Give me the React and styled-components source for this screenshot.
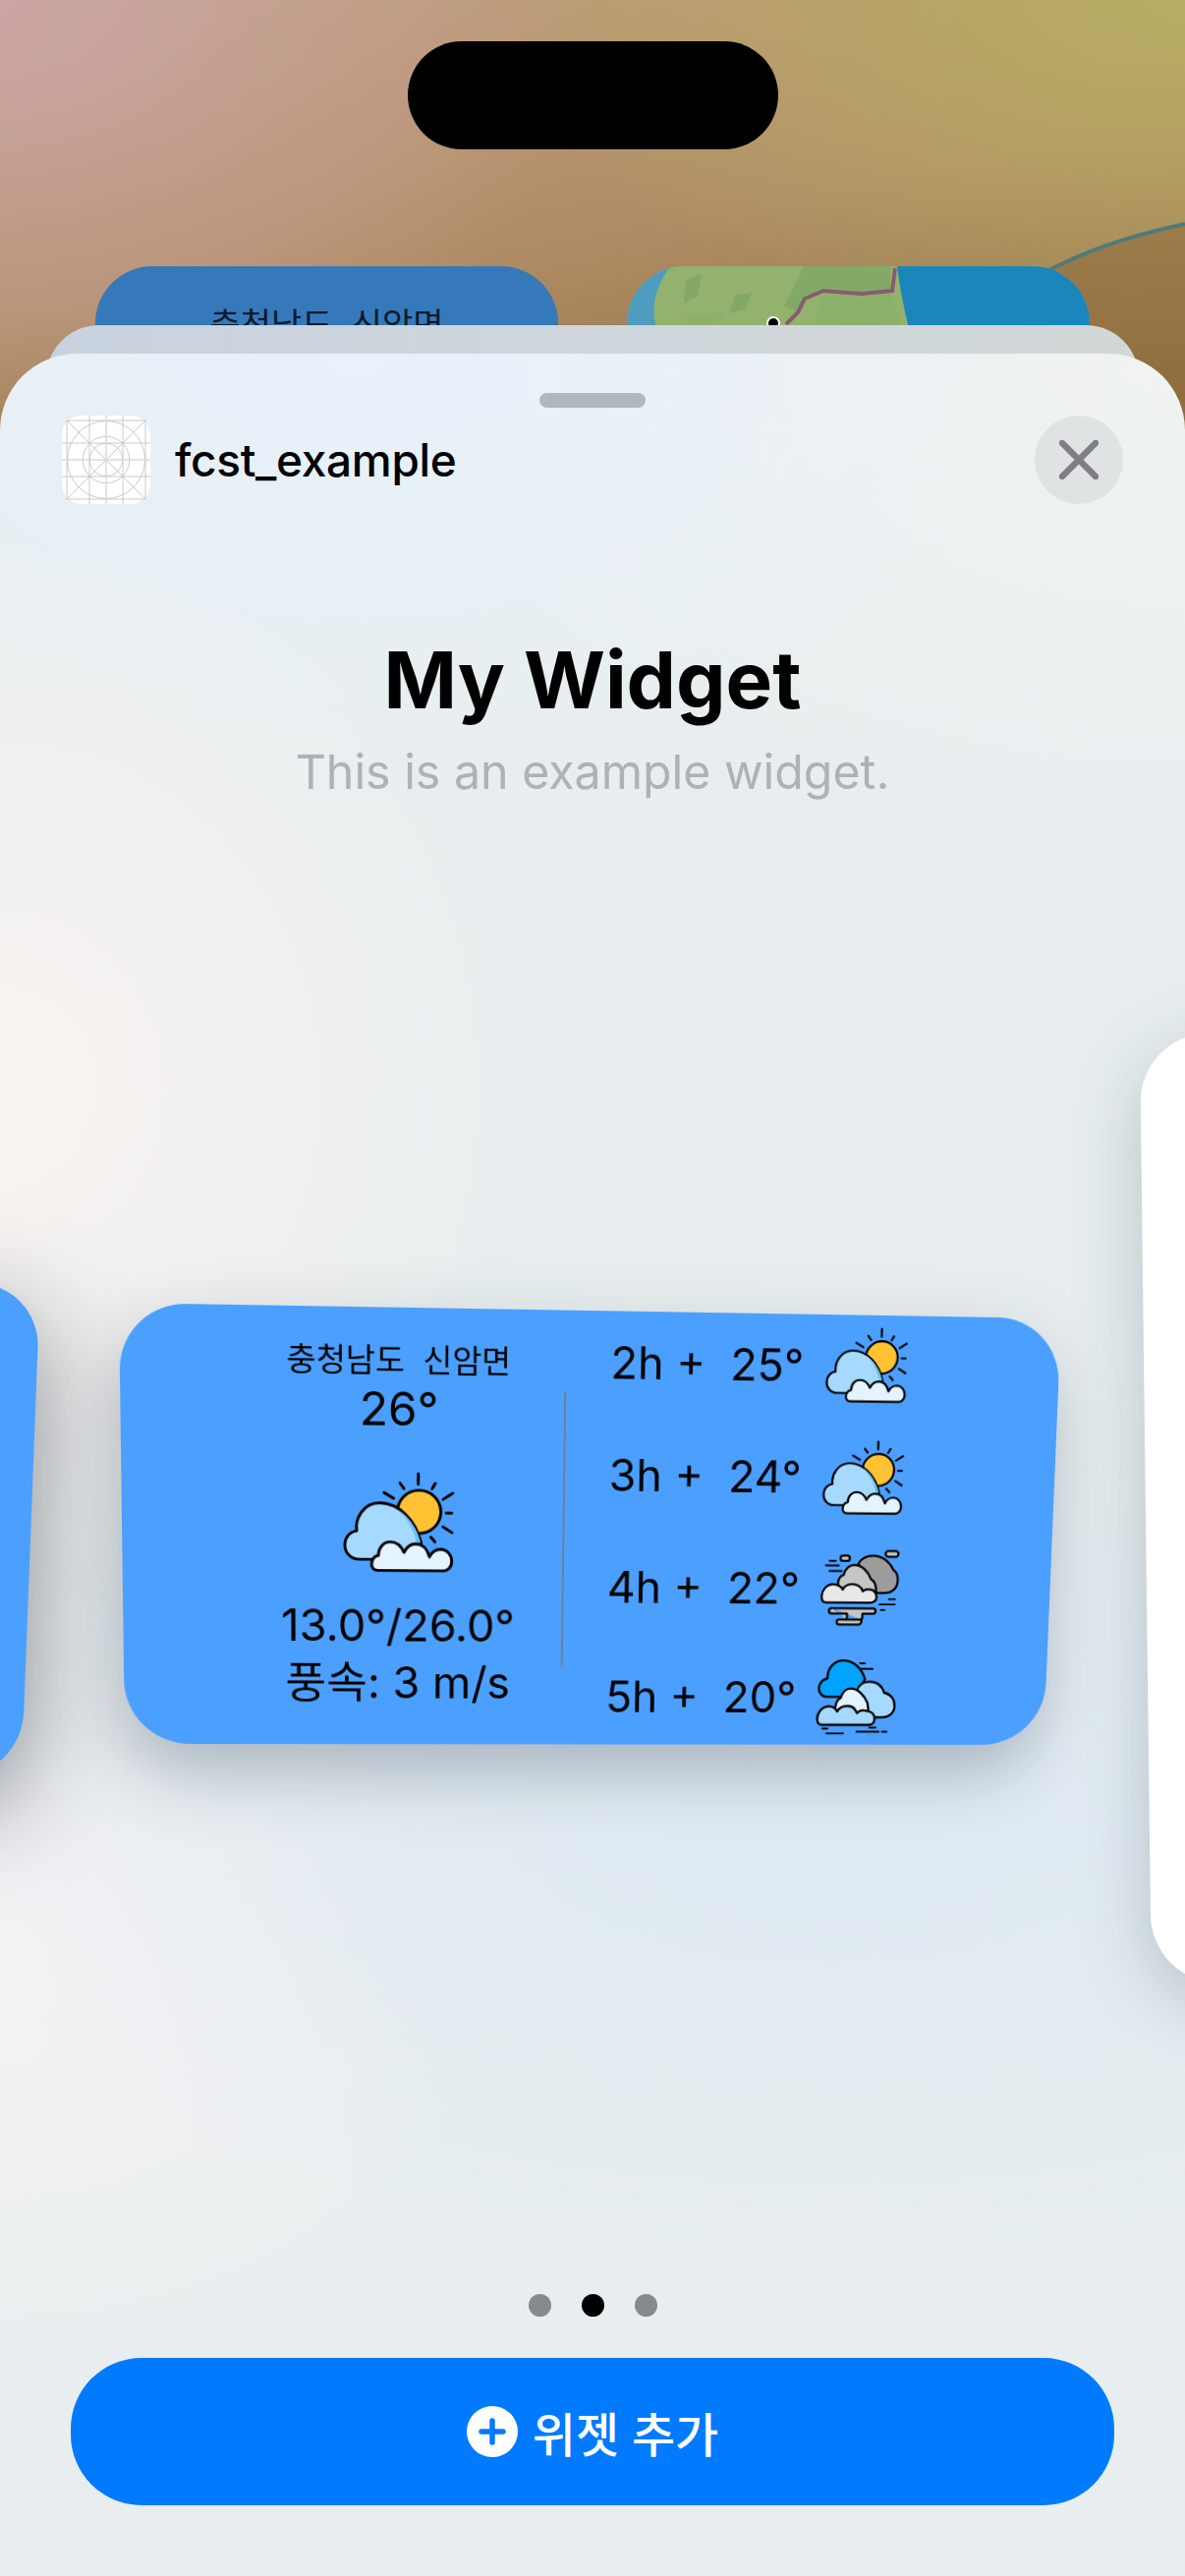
import React from "react";
import styled, { createGlobalStyle } from "styled-components";

const GlobalStyle = createGlobalStyle`
  html, body {
    margin: 0;
    padding: 0;
    background: #000;
  }
  body {
    font-family: Inter, "Noto Sans CJK KR", sans-serif;
  }
`;

const Screen = styled.div`
  position: relative;
  width: 1206px;
  height: 2622px;
  overflow: hidden;
  background:
    radial-gradient(760px 560px at 0% 0%, #cba4a4 0%, rgba(203, 164, 164, 0) 80%),
    radial-gradient(760px 420px at 100% 0%, #b8ae62 0%, rgba(184, 174, 98, 0) 90%),
    radial-gradient(720px 520px at 0% 55%, #b2837b 0%, rgba(178, 131, 123, 0) 85%),
    linear-gradient(170deg, #c0a07c 0%, #b08d66 12%, #916e40 22%);
`;

const Horizon = styled.svg`
  position: absolute;
  top: 0;
  left: 0;
`;

const Island = styled.div`
  position: relative;
  width: 377px;
  height: 110px;
  margin: 42px auto 0;
  border-radius: 55px;
  background: #000;
`;

const HomeRow = styled.div`
  position: relative;
  display: flex;
  gap: 70px;
  margin: 119px 0 0 97px;
`;

const HomeWidget = styled.div`
  position: relative;
  width: 471px;
  height: 120px;
  overflow: hidden;
  border-radius: 58px 58px 0 0;
  background: ${props => props.$bg};
  text-align: center;
  font-size: 34px;
  line-height: 46px;
  color: #0b1a2a;
  padding-top: 37px;
  box-sizing: border-box;
  white-space: pre;
`;

const MapDrawing = styled.svg`
  position: absolute;
  top: 0;
  left: 0;
`;

const BackSheet = styled.div`
  position: absolute;
  top: 331px;
  left: 47px;
  right: 47px;
  height: 200px;
  border-radius: 54px 54px 0 0;
  background: linear-gradient(90deg, #c8d2de 0%, #cfd6dc 50%, #d2d8d7 100%);
`;

const Sheet = styled.div`
  position: absolute;
  top: 360px;
  left: 0;
  right: 0;
  bottom: 0;
  display: flex;
  flex-direction: column;
  overflow: hidden;
  border-radius: 78px 78px 0 0;
  padding-top: 40px;
  box-sizing: border-box;
  background:
    radial-gradient(520px 560px at 0% 33%, #f9f3f0 0%, rgba(249, 243, 240, 0) 100%),
    radial-gradient(700px 420px at 30% 0%, #e8f1fc 0%, rgba(232, 241, 252, 0) 100%),
    radial-gradient(800px 480px at 100% 0%, #f0f3f2 0%, rgba(240, 243, 242, 0) 100%),
    radial-gradient(1000px 440px at 70% 66%, #dfeaf4 0%, rgba(223, 234, 244, 0) 100%),
    radial-gradient(520px 400px at 0% 72%, #f6f3f4 0%, rgba(246, 243, 244, 0) 100%),
    #e8eeef;
`;

const Grabber = styled.div`
  align-self: center;
  width: 108px;
  height: 15px;
  border-radius: 8px;
  background: #b1b7c1;
`;

const Header = styled.div`
  display: flex;
  align-items: center;
  justify-content: space-between;
  height: 90px;
  margin-top: 8px;
  padding: 0 63px;
`;

const AppInfo = styled.div`
  display: flex;
  align-items: center;
  gap: 25px;
`;

const AppIcon = styled.svg`
  display: block;
  width: 90px;
  height: 90px;
`;

const AppName = styled.div`
  font-size: 46px;
  font-weight: 500;
  color: #000;
  letter-spacing: -0.3px;
`;

const CloseButton = styled.div`
  display: flex;
  align-items: center;
  justify-content: center;
  width: 90px;
  height: 90px;
  border-radius: 50%;
  background: #dfe3e4;
`;

const Title = styled.div`
  margin-top: 129px;
  text-align: center;
  font-size: 80px;
  line-height: 100px;
  font-weight: 700;
  color: #000;
`;

const Subtitle = styled.div`
  margin-top: 14px;
  text-align: center;
  font-size: 48.3px;
  line-height: 60px;
  color: #aeb1b5;
`;

const Carousel = styled.div`
  display: flex;
  align-items: flex-start;
  height: 967px;
  margin-top: 236px;
  flex-shrink: 0;
`;

const SideWidget = styled.div`
  flex-shrink: 0;
  width: 950px;
  height: 503px;
  margin: 254px 0 0 -909px;
  border-radius: 66px;
  background: #4ba0ff;
  box-shadow: 0 30px 100px rgba(50, 55, 70, 0.55);
  transform: skewX(-2.2deg);
  transform-origin: top right;
`;

const Widget = styled.div`
  display: flex;
  flex-shrink: 0;
  box-sizing: border-box;
  width: 950px;
  height: 445px;
  margin: 274px 0 0 80px;
  border-radius: 66px;
  background: #4ba0ff;
  box-shadow: -6px 30px 70px rgba(60, 72, 92, 0.34);
  color: #000;
  /* tilted card, four corners measured from the screenshot */
  transform: matrix3d(1.04431, 0.01742, 0, 0.00003632, 0.01384, 1.03555, 0, 0.00005917, 0, 0, 1, 0, 0, 0, 0, 1);
  transform-origin: 0 0;
`;

const NextWidget = styled.div`
  flex-shrink: 0;
  width: 300px;
  height: 967px;
  margin-left: 89px;
  border-radius: 70px;
  background: #fff;
  box-shadow: 0 20px 70px rgba(60, 80, 90, 0.28);
  transform: skewX(0.7deg);
  transform-origin: top left;
`;

const TodayColumn = styled.div`
  display: flex;
  flex-direction: column;
  align-items: center;
  box-sizing: border-box;
  width: 442px;
  padding: 33px 0 0 110px;
`;

const Place = styled.div`
  font-size: 32px;
  line-height: 40px;
  white-space: pre;
`;

const BigLine = styled.div`
  font-size: ${props => props.$size || 45}px;
  line-height: 56px;
  margin-top: ${props => props.$top || 0}px;
  white-space: pre;
`;

const TodayIcon = styled.div`
  width: 112px;
  height: 105px;
  margin-top: 35px;
`;

const Divider = styled.div`
  flex-shrink: 0;
  align-self: center;
  width: 1.5px;
  height: 282px;
  background: #6f7f92;
`;

const HoursColumn = styled.div`
  display: flex;
  flex-direction: column;
  gap: 14.5px;
  padding: 1px 0 0 45px;
`;

const HourRow = styled.div`
  display: flex;
  align-items: center;
  height: 100px;
`;

const HourText = styled.div`
  width: 219px;
  font-size: 45px;
  white-space: pre;
`;

const HourIcon = styled.div`
  width: 84px;
  height: 80px;
`;

const IconSvg = styled.svg`
  display: block;
  width: 100%;
  height: 100%;
`;

const Dots = styled.div`
  display: flex;
  justify-content: center;
  gap: 31px;
  margin-top: 316px;
`;

const Dot = styled.div`
  width: 23px;
  height: 23px;
  border-radius: 50%;
  background: ${props => (props.$active ? "#000" : "#87898d")};
`;

const AddButton = styled.div`
  display: flex;
  align-items: center;
  justify-content: center;
  gap: 15px;
  height: 150px;
  margin: 42px 72px 0;
  border-radius: 72px;
  background: #007aff;
  color: #fff;
  font-size: 48px;
  font-weight: 500;
`;

const Stroke = { stroke: "#000", strokeWidth: 9, strokeLinecap: "round", strokeLinejoin: "round" };

const SunCloudIcon = () => (
  <IconSvg viewBox="-3 0 348 320">
    <g {...Stroke} fill="none">
      <path d="M232 5V38M175 35L187 52M285 35L275 52M340 65L310 85M320 128H337M310 172L338 190M272 205L285 220M125 65L155 83" />
    </g>
    <circle cx="235" cy="125" r="68" fill="#ffc233" {...Stroke} />
    <path d="M90 277H50C20 277 3 255 3 232C3 208 18 190 40 187C34 150 60 98 112 98C170 98 225 150 242 225L130 290Z" fill="#a5dafe" {...Stroke} />
    <path d="M165 117C200 135 228 175 240 222L228 224C215 175 195 140 165 117Z" fill="#6fbdf8" />
    <path d="M105 312C92 312 85 300 87 288C89 274 98 266 108 264C108 238 125 221 145 221C165 221 180 235 188 254C197 236 210 227 225 227C247 227 262 245 268 268C276 250 292 243 305 243C325 245 338 262 338 282C338 300 325 312 312 312Z" fill="#e4f4ff" {...Stroke} />
  </IconSvg>
);

const FogCloudIcon = () => (
  <IconSvg viewBox="-2 0 254 248">
    <g {...Stroke} strokeWidth="6" fill="none">
      <path d="M25 37H45M13 52H55M25 70H65M190 177H240M220 160H240M195 195H207" />
    </g>
    <g {...Stroke} strokeWidth="7">
      <rect x="205" y="4" width="42" height="19" rx="9.5" fill="#c6c6c6" />
      <rect x="60" y="20" width="30" height="17" rx="8.5" fill="#c6c6c6" />
      <path d="M118 45C130 25 150 20 165 20C195 20 220 40 232 65C245 72 248 90 247 105C245 125 230 140 205 140H170L150 100Z" fill="#9c9c9c" />
      <path d="M55 120C50 100 60 85 72 82C75 62 90 50 105 50C130 50 150 70 160 95C170 100 178 115 178 135H60Z" fill="#c6c6c6" />
      <path d="M18 172C5 172 2 160 2 152C2 135 15 115 35 113C50 112 65 120 70 130C75 118 88 112 100 112C115 112 130 120 135 135C145 125 155 128 165 130C175 135 180 145 180 155C180 165 170 172 160 172Z" fill="#e8e8e8" />
      <path d="M36 190H170C181 190 181 207 170 207H136V218C136 224 134 227 128 227H62C50 227 50 243 62 243H122C132 243 134 236 134 226" fill="#c6c6c6" />
      <path d="M36 190C24 190 24 207 36 207H86V226" fill="#c6c6c6" />
    </g>
  </IconSvg>
);

const RainCloudIcon = () => (
  <IconSvg viewBox="0 0 250 240">
    <g {...Stroke} strokeWidth="6" fill="none">
      <path d="M133 12H148M138 29H173M20 219H36M33 235H86M128 229H198M168 215H188M208 229H223" />
    </g>
    <g {...Stroke} strokeWidth="7">
      <path d="M30 118C12 118 5 100 6 90C6 75 18 62 32 60C30 30 50 3 80 3C115 3 140 30 150 62L120 118Z" fill="#00a3ff" />
      <path d="M125 100C130 80 145 70 165 70C190 70 205 85 212 105C232 108 246 125 246 147C246 168 230 183 208 183H150Z" fill="#a5dafe" />
      <path d="M60 170C55 145 65 125 75 122C80 105 90 92 105 92C130 92 150 115 160 137L165 170Z" fill="#e4f4ff" />
      <path d="M18 207C6 207 3 195 3 187C3 170 15 150 38 148C50 148 60 155 65 165C72 150 85 147 98 147C112 147 122 155 128 170C135 160 150 160 160 163C175 165 184 175 184 188C184 200 175 207 165 207Z" fill="#a5dafe" />
    </g>
  </IconSvg>
);

const hours = [
  { text: "2h +  25°", Icon: SunCloudIcon },
  { text: "3h +  24°", Icon: SunCloudIcon },
  { text: "4h +  22°", Icon: FogCloudIcon },
  { text: "5h +  20°", Icon: RainCloudIcon },
];

const App = () => (
  <Screen>
    <GlobalStyle />
    <Horizon width="1206" height="480" viewBox="0 0 1206 480">
      <path d="M1206 228C1150 240 1100 255 1040 290V480H1206Z" fill="#8f6c3c" opacity="0.6" />
      <path d="M1206 228C1150 240 1100 255 1040 290" fill="none" stroke="#4f7a7c" strokeWidth="4" />
    </Horizon>
    <Island />
    <HomeRow>
      <HomeWidget $bg="#3579bb">충청남도  신암면</HomeWidget>
      <HomeWidget $bg="#93b26d">
        <MapDrawing width="471" height="120" viewBox="0 0 471 120">
          <path d="M0 0H44C30 20 24 40 30 62L44 120H0Z" fill="#4e9dbe" />
          <path d="M275 0H471V120H304C290 80 280 40 275 0Z" fill="#1a86bb" />
          <path d="M60 14L76 8L72 30L58 38ZM180 0H268V24L238 28L200 24L182 30L172 46L160 40ZM110 30L128 26L120 44L104 48Z" fill="#82aa66" />
          <path d="M200 30L268 26L278 60H190ZM60 50L100 46L90 58L62 60Z" fill="#8bb06a" />
          <path d="M273 2L270 25L239 28L200 25L181 33L174 47L162 59" fill="none" stroke="#8a5a72" strokeWidth="4" />
          <circle cx="149" cy="58" r="6" fill="#000" stroke="#fff" strokeWidth="2" />
        </MapDrawing>
      </HomeWidget>
    </HomeRow>
    <BackSheet />
    <Sheet>
      <Grabber />
      <Header>
        <AppInfo>
          <AppIcon viewBox="0 0 90 90">
            <rect width="90" height="90" rx="20" fill="#fff" />
            <g fill="none" stroke="#bdbdbd" strokeWidth="0.8">
              <path d="M28 0V90M62 0V90M0 28H90M0 62H90M5 5H85V85H5ZM5 5L85 85M85 5L5 85" />
              <circle cx="45" cy="45" r="39.5" />
              <circle cx="45" cy="45" r="23.7" />
              <circle cx="45" cy="45" r="16.7" />
            </g>
            <path d="M45 0V90M0 45H90" stroke="#dcdcdc" strokeWidth="1.6" />
          </AppIcon>
          <AppName>fcst_example</AppName>
        </AppInfo>
        <CloseButton>
          <svg width="40" height="40" viewBox="0 0 40 40">
            <path d="M3 3L37 37M37 3L3 37" stroke="#7d7f82" strokeWidth="6.5" strokeLinecap="round" />
          </svg>
        </CloseButton>
      </Header>
      <Title>My Widget</Title>
      <Subtitle>This is an example widget.</Subtitle>
      <Carousel>
        <SideWidget />
        <Widget>
          <TodayColumn>
            <Place>충청남도  신암면</Place>
            <BigLine $size={47}>26°</BigLine>
            <TodayIcon>
              <SunCloudIcon />
            </TodayIcon>
            <BigLine $top={25}>13.0°/26.0°</BigLine>
            <BigLine $top={3}>풍속: 3 m/s</BigLine>
          </TodayColumn>
          <Divider />
          <HoursColumn>
            {hours.map(({ text, Icon }) => (
              <HourRow key={text}>
                <HourText>{text}</HourText>
                <HourIcon>
                  <Icon />
                </HourIcon>
              </HourRow>
            ))}
          </HoursColumn>
        </Widget>
        <NextWidget />
      </Carousel>
      <Dots>
        <Dot />
        <Dot $active />
        <Dot />
      </Dots>
      <AddButton>
        <svg width="52" height="52" viewBox="0 0 52 52">
          <circle cx="26" cy="26" r="26" fill="#fff" />
          <path d="M26 15V37M15 26H37" stroke="#007aff" strokeWidth="5.5" strokeLinecap="round" />
        </svg>
        위젯 추가
      </AddButton>
    </Sheet>
  </Screen>
);

export default App;
